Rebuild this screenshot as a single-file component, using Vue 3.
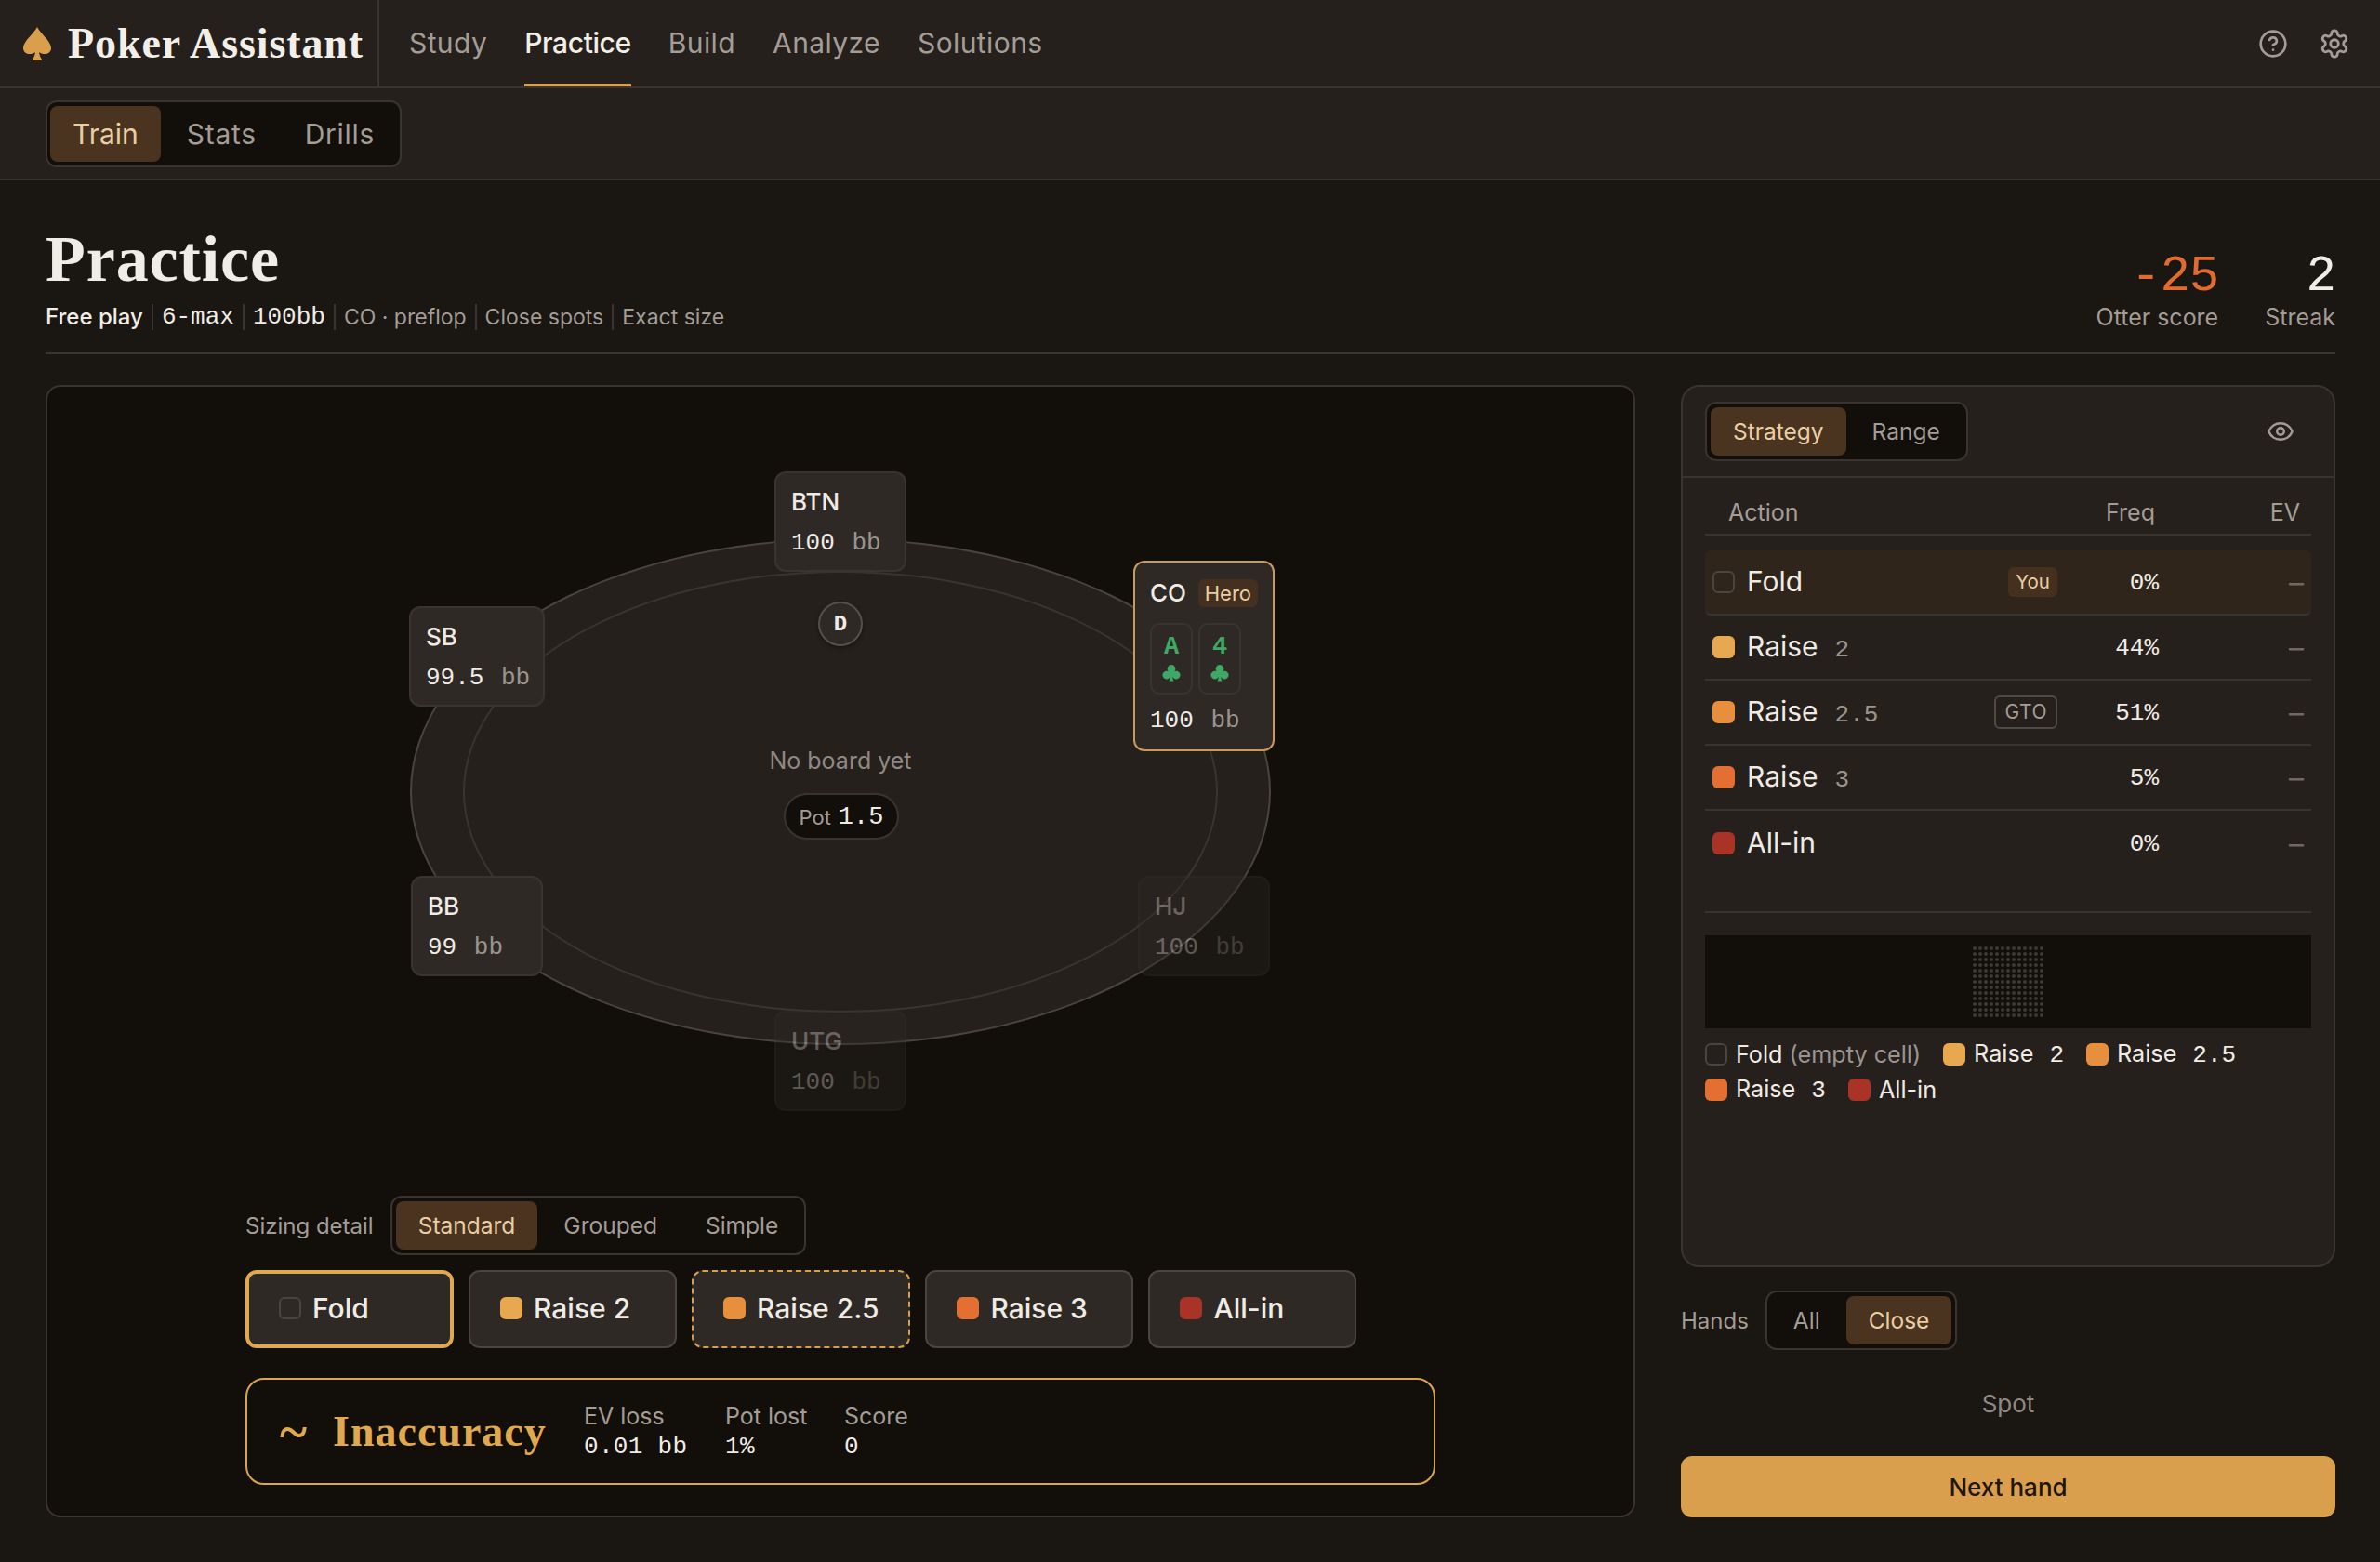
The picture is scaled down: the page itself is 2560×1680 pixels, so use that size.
<template>
  <div class="app">
    <header class="topbar">
      <div class="brand">
        <svg class="spade" viewBox="0 0 32 36"><path d="M16 0C20 8 31 15 31 23C31 29 23 31 18 27C18.5 31 20 34 22 36H10C12 34 13.5 31 14 27C9 31 1 29 1 23C1 15 12 8 16 0Z" /></svg>
        <span class="brand-name">Poker Assistant</span>
      </div>
      <nav class="nav">
        <a v-for="item in navItems" :key="item" class="nav-item" :class="{ active: item === 'Practice' }">{{ item }}</a>
      </nav>
      <div class="top-icons">
        <svg class="icon help" viewBox="0 0 24 24"><circle cx="12" cy="12" r="10" /><path d="M9.09 9a3 3 0 0 1 5.83 1c0 2-3 3-3 3" /><path d="M12 17h.01" /></svg>
        <svg class="icon gear" viewBox="0 0 24 24"><path d="M12.22 2h-.44a2 2 0 0 0-2 2v.18a2 2 0 0 1-1 1.73l-.43.25a2 2 0 0 1-2 0l-.15-.08a2 2 0 0 0-2.73.73l-.22.38a2 2 0 0 0 .73 2.73l.15.1a2 2 0 0 1 1 1.72v.51a2 2 0 0 1-1 1.74l-.15.09a2 2 0 0 0-.73 2.73l.22.38a2 2 0 0 0 2.73.73l.15-.08a2 2 0 0 1 2 0l.43.25a2 2 0 0 1 1 1.73V20a2 2 0 0 0 2 2h.44a2 2 0 0 0 2-2v-.18a2 2 0 0 1 1-1.73l.43-.25a2 2 0 0 1 2 0l.15.08a2 2 0 0 0 2.73-.73l.22-.39a2 2 0 0 0-.73-2.73l-.15-.08a2 2 0 0 1-1-1.74v-.5a2 2 0 0 1 1-1.74l.15-.09a2 2 0 0 0 .73-2.73l-.22-.38a2 2 0 0 0-2.73-.73l-.15.08a2 2 0 0 1-2 0l-.43-.25a2 2 0 0 1-1-1.73V4a2 2 0 0 0-2-2z" /><circle cx="12" cy="12" r="3" /></svg>
      </div>
    </header>

    <div class="subbar">
      <div class="seg seg-large">
        <span class="seg-tab active">Train</span>
        <span class="seg-tab">Stats</span>
        <span class="seg-tab">Drills</span>
      </div>
    </div>

    <main class="page">
      <section class="page-head">
        <div>
          <h1 class="title">Practice</h1>
          <div class="meta">
            <span class="meta-item strong">Free play</span>
            <span class="meta-item mono strong">6-max</span>
            <span class="meta-item mono strong">100bb</span>
            <span class="meta-item">CO · preflop</span>
            <span class="meta-item">Close spots</span>
            <span class="meta-item">Exact size</span>
          </div>
        </div>
        <div class="scores">
          <div class="score">
            <div class="score-num negative">-25</div>
            <div class="score-label">Otter score</div>
          </div>
          <div class="score">
            <div class="score-num">2</div>
            <div class="score-label">Streak</div>
          </div>
        </div>
      </section>

      <div class="columns">
        <section class="table-panel">
          <div class="canvas">
            <div class="oval"><div class="oval-inner"></div></div>

            <div class="dealer">D</div>
            <div class="board-text">No board yet</div>
            <div class="pot"><span class="pot-label">Pot</span> <span class="pot-num">1.5</span></div>

            <div v-for="seat in seats" :key="seat.name" class="seat" :class="[seat.cls, { dim: seat.dim }]">
              <div class="seat-name">{{ seat.name }}</div>
              <div class="seat-stack">{{ seat.stack }} <span class="bb">bb</span></div>
            </div>

            <div class="seat seat-co">
              <div class="hero-head">
                <span class="seat-name">CO</span>
                <span class="hero-badge">Hero</span>
              </div>
              <div class="cards">
                <div v-for="rank in ['A', '4']" :key="rank" class="card">
                  <span class="rank">{{ rank }}</span>
                  <svg class="club" viewBox="0 0 20 20"><path d="M10 1a4.3 4.3 0 0 0-3.4 7A4.4 4.4 0 1 0 8.8 14c-.1 1.700-.5 3-1.300 4.500h5c-.8-1.500-1.200-2.800-1.300-4.500a4.400 4.400 0 1 0 2.200-6A4.300 4.300 0 0 0 10 1z" /></svg>
                </div>
              </div>
              <div class="seat-stack">100 <span class="bb">bb</span></div>
            </div>
          </div>

          <div class="controls">
            <div class="sizing">
              <span class="sizing-label">Sizing detail</span>
              <div class="seg">
                <span class="seg-tab active">Standard</span>
                <span class="seg-tab">Grouped</span>
                <span class="seg-tab">Simple</span>
              </div>
            </div>

            <div class="actions">
              <button v-for="btn in actionButtons" :key="btn.label" class="action-btn" :class="btn.cls">
                <span class="swatch" :class="btn.swatch"></span>{{ btn.label }}
              </button>
            </div>

            <div class="verdict">
              <span class="verdict-mark">~</span>
              <span class="verdict-name">Inaccuracy</span>
              <div class="verdict-stat ev">
                <span class="verdict-label">EV loss</span>
                <span class="verdict-value">0.01 bb</span>
              </div>
              <div class="verdict-stat pot-lost">
                <span class="verdict-label">Pot lost</span>
                <span class="verdict-value">1%</span>
              </div>
              <div class="verdict-stat">
                <span class="verdict-label">Score</span>
                <span class="verdict-value">0</span>
              </div>
            </div>
          </div>
        </section>

        <aside class="side">
          <section class="strategy">
            <div class="strategy-head">
              <div class="seg">
                <span class="seg-tab active">Strategy</span>
                <span class="seg-tab">Range</span>
              </div>
              <svg class="icon eye" viewBox="0 0 24 24"><path d="M2.062 12.348a1 1 0 0 1 0-.696 10.75 10.75 0 0 1 19.876 0 1 1 0 0 1 0 .696 10.750 10.750 0 0 1-19.876 0" /><circle cx="12" cy="12" r="3" /></svg>
            </div>

            <div class="strategy-body">
              <div class="table-head">
                <span>Action</span>
                <span class="head-freq">Freq</span>
                <span class="head-ev">EV</span>
              </div>

              <div class="rows">
                <div v-for="row in rows" :key="row.name + row.size" class="row" :class="{ chosen: row.badge === 'You' }">
                  <span class="swatch" :class="row.swatch"></span>
                  <span class="row-name">{{ row.name }}<span v-if="row.size" class="row-size">{{ row.size }}</span></span>
                  <span v-if="row.badge" class="badge" :class="row.badge === 'You' ? 'badge-you' : 'badge-gto'">{{ row.badge }}</span>
                  <span class="row-freq">{{ row.freq }}</span>
                  <span class="row-ev">–</span>
                </div>
              </div>

              <div class="heat">
                <div class="heat-grid">
                  <i v-for="n in 169" :key="n" class="heat-dot"></i>
                </div>
              </div>

              <div class="legend">
                <span class="legend-item"><span class="swatch fold"></span><span>Fold <em>(empty cell)</em></span></span>
                <span class="legend-item"><span class="swatch r2"></span><span>Raise<b>2</b></span></span>
                <span class="legend-item"><span class="swatch r25"></span><span>Raise<b>2.5</b></span></span>
                <span class="legend-item"><span class="swatch r3"></span><span>Raise<b>3</b></span></span>
                <span class="legend-item"><span class="swatch allin"></span><span>All-in</span></span>
              </div>
            </div>
          </section>

          <div class="hands">
            <span class="hands-label">Hands</span>
            <div class="seg">
              <span class="seg-tab">All</span>
              <span class="seg-tab active">Close</span>
            </div>
          </div>

          <div class="spot">Spot</div>

          <button class="next">Next hand</button>
        </aside>
      </div>
    </main>
  </div>
</template>

<script setup>
const navItems = ['Study', 'Practice', 'Build', 'Analyze', 'Solutions']

const seats = [
  { name: 'BTN', stack: '100', cls: 'seat-btn' },
  { name: 'SB', stack: '99.5', cls: 'seat-sb' },
  { name: 'BB', stack: '99', cls: 'seat-bb' },
  { name: 'HJ', stack: '100', cls: 'seat-hj', dim: true },
  { name: 'UTG', stack: '100', cls: 'seat-utg', dim: true }
]

const actionButtons = [
  { label: 'Fold', swatch: 'fold', cls: 'picked' },
  { label: 'Raise 2', swatch: 'r2' },
  { label: 'Raise 2.5', swatch: 'r25', cls: 'best' },
  { label: 'Raise 3', swatch: 'r3' },
  { label: 'All-in', swatch: 'allin' }
]

const rows = [
  { name: 'Fold', size: '', swatch: 'fold', freq: '0%', badge: 'You' },
  { name: 'Raise', size: '2', swatch: 'r2', freq: '44%' },
  { name: 'Raise', size: '2.5', swatch: 'r25', freq: '51%', badge: 'GTO' },
  { name: 'Raise', size: '3', swatch: 'r3', freq: '5%' },
  { name: 'All-in', size: '', swatch: 'allin', freq: '0%' }
]
</script>

<style>
html, body {
  background: #1a1612;
}
</style>

<style scoped>
.app {
  min-height: 1680px;
  background: #1a1612;
  color: #efebe5;
  font-family: Inter, "Noto Sans", sans-serif;
}
.topbar {
  height: 95px;
  display: flex;
  background: #26201d;
  border-bottom: 2px solid #3a3431;
  box-sizing: border-box;
}
.brand {
  width: 408px;
  box-sizing: border-box;
  padding-left: 24px;
  display: flex;
  align-items: center;
  gap: 17px;
  border-right: 2px solid #3a3431;
}
.spade {
  width: 32px;
  height: 36px;
  fill: #d99f4d;
}
.brand-name {
  font-family: "Liberation Serif", serif;
  font-weight: 700;
  font-size: 46px;
  letter-spacing: 0.9px;
  color: #f2eee8;
}
.nav {
  display: flex;
  gap: 40px;
  padding-left: 32px;
  flex: 1;
}
.nav-item {
  font-size: 30px;
  line-height: 93px;
  letter-spacing: 0.4px;
  color: #a39d96;
  height: 93px;
  box-sizing: border-box;
}
.nav-item.active {
  color: #f2eee8;
  font-weight: 500;
  letter-spacing: -0.4px;
  border-bottom: 3px solid #d99f4d;
}
.top-icons {
  display: flex;
  align-items: center;
  gap: 33px;
  padding-right: 32px;
}
.icon {
  fill: none;
  stroke: #a39d96;
  stroke-width: 2;
  stroke-linecap: round;
  stroke-linejoin: round;
}
.help {
  width: 32px;
  height: 32px;
}
.gear {
  width: 34px;
  height: 34px;
}
.subbar {
  height: 99px;
  box-sizing: border-box;
  padding: 13px 49px 0;
  background: #26201d;
  border-bottom: 2px solid #3a3431;
}
.seg {
  display: inline-flex;
  gap: 4px;
  box-sizing: border-box;
  height: 64px;
  padding: 4px;
  background: #120e0a;
  border: 2px solid #3a3431;
  border-radius: 12px;
}
.seg-tab {
  display: flex;
  align-items: center;
  padding: 0 24px;
  font-size: 24.5px;
  color: #a39d96;
  border-radius: 8px;
}
.seg-tab.active {
  background: #4a331f;
  color: #e9cfa4;
}
.seg-large {
  height: 72px;
  padding: 4px 3px;
}
.seg-large .seg-tab {
  font-size: 30px;
  letter-spacing: 0.7px;
  padding: 0 24px;
}
.seg-large .seg-tab.active {
  letter-spacing: 0;
}
.page {
  padding: 0 48px 0 49px;
}
.page-head {
  display: flex;
  justify-content: space-between;
  align-items: flex-end;
  padding: 45px 0 20px;
  border-bottom: 2px solid #3a3431;
  margin-bottom: 33px;
}
.title {
  margin: 0;
  font-family: "Liberation Serif", serif;
  font-size: 70px;
  line-height: 80px;
  font-weight: 700;
  letter-spacing: 0.9px;
  color: #f0ece6;
}
.meta {
  display: flex;
  align-items: center;
  margin-top: 4px;
  height: 36px;
  font-size: 23px;
  color: #a39d96;
}
.meta-item {
  padding: 0 9px;
  border-left: 2px solid #3a3431;
  line-height: 28px;
}
.meta-item:first-child {
  padding-left: 0;
  border-left: none;
}
.meta-item.strong {
  color: #f0ece6;
  font-size: 24px;
  font-weight: 500;
}
.meta-item.mono {
  font-family: "Liberation Mono", monospace;
  font-size: 26px;
  font-weight: 400;
}
.scores {
  display: flex;
  gap: 50px;
  text-align: right;
}
.score-num {
  font-family: "Liberation Mono", monospace;
  font-size: 54px;
  line-height: 50px;
  letter-spacing: -1px;
  color: #f0ece6;
}
.score-num.negative {
  color: #e06c32;
}
.score-label {
  font-size: 25px;
  line-height: 36px;
  color: #a39d96;
}
.columns {
  display: grid;
  grid-template-columns: 1710px 704px;
  gap: 49px;
  height: 1216px;
}
.table-panel {
  box-sizing: border-box;
  background: #120e0a;
  border: 2px solid #3a3431;
  border-radius: 16px;
  display: flex;
  flex-direction: column;
  align-items: center;
}
.canvas {
  position: relative;
  width: 936px;
  height: 692px;
  margin-top: 89px;
  flex-shrink: 0;
}
.oval {
  position: absolute;
  left: 5px;
  top: 74px;
  width: 926px;
  height: 545px;
  box-sizing: border-box;
  border: 2px solid #4a443f;
  border-radius: 50%;
  background: #26201d;
}
.oval-inner {
  position: absolute;
  inset: 33px 55px;
  border: 2px solid #3a3431;
  border-radius: 50%;
}
.dealer {
  position: absolute;
  left: 444px;
  top: 142px;
  width: 48px;
  height: 48px;
  box-sizing: border-box;
  border-radius: 50%;
  background: #2f2925;
  border: 2px solid #55504b;
  display: flex;
  align-items: center;
  justify-content: center;
  font-family: "Liberation Mono", monospace;
  font-weight: 700;
  font-size: 24px;
  box-shadow: 0 2px 4px rgba(0, 0, 0, 0.4);
}
.board-text {
  position: absolute;
  left: 0;
  right: 0;
  top: 296px;
  text-align: center;
  font-size: 25px;
  line-height: 34px;
  color: #8f8984;
}
.pot {
  position: absolute;
  left: 407px;
  top: 348px;
  width: 124px;
  height: 50px;
  box-sizing: border-box;
  padding-top: 2px;
  border: 2px solid #3a3431;
  border-radius: 25px;
  background: #120e0a;
  display: flex;
  align-items: center;
  justify-content: center;
  gap: 8px;
}
.pot-label {
  font-size: 22px;
  color: #a39d96;
}
.pot-num {
  font-family: "Liberation Mono", monospace;
  font-size: 27px;
  color: #efebe5;
}
.seat {
  position: absolute;
  box-sizing: border-box;
  width: 142px;
  height: 108px;
  padding: 15px 16px;
  background: #2f2925;
  border: 2px solid #3a3431;
  border-radius: 12px;
}
.seat-btn { left: 397px; top: 2px; }
.seat-sb { left: 4px; top: 147px; width: 146px; }
.seat-bb { left: 6px; top: 437px; }
.seat-hj { left: 788px; top: 437px; }
.seat-utg { left: 397px; top: 582px; }
.seat.dim {
  opacity: 0.34;
}
.seat-name {
  font-size: 26px;
  line-height: 32px;
  font-weight: 500;
  color: #efebe5;
}
.seat-stack {
  margin-top: 12px;
  font-family: "Liberation Mono", monospace;
  font-size: 26px;
  line-height: 32px;
  color: #efebe5;
  white-space: nowrap;
}
.bb {
  margin-left: 3px;
  color: #9a948e;
}
.seat-co {
  left: 783px;
  top: 98px;
  width: 152px;
  height: 205px;
  padding: 18px 16px;
  border-color: #c99a5c;
}
.hero-head {
  display: flex;
  align-items: center;
  justify-content: space-between;
  height: 30px;
}
.hero-badge {
  height: 30px;
  padding: 0 7px;
  border-radius: 6px;
  background: #45301f;
  color: #e9cfa4;
  font-size: 22px;
  line-height: 30px;
}
.cards {
  display: flex;
  gap: 6px;
  margin-top: 17px;
}
.card {
  width: 46px;
  height: 77px;
  box-sizing: border-box;
  border: 2px solid #3a3431;
  border-radius: 10px;
  display: flex;
  flex-direction: column;
  align-items: center;
  padding-top: 9px;
}
.rank {
  font-family: "Liberation Mono", monospace;
  font-size: 27px;
  line-height: 30px;
  font-weight: 700;
  color: #3fa866;
}
.club {
  width: 20px;
  height: 20px;
  margin-top: 3px;
  fill: #3fa866;
}
.controls {
  width: 1280px;
  margin-top: 89px;
}
.sizing {
  display: flex;
  align-items: center;
  gap: 18px;
}
.sizing-label {
  font-size: 24px;
  color: #a39d96;
}
.actions {
  display: flex;
  gap: 16px;
  margin-top: 16px;
}
.action-btn {
  display: flex;
  align-items: center;
  min-width: 224px;
  height: 84px;
  box-sizing: border-box;
  padding: 0 32px 2px;
  background: #2f2925;
  border: 2px solid #4a4541;
  border-radius: 12px;
  color: #efebe5;
  font-family: inherit;
  font-size: 30px;
  font-weight: 500;
}
.action-btn .swatch {
  margin-right: 12px;
}
.action-btn.picked {
  border: 4px solid #e0a94f;
}
.action-btn.best {
  border: 2px dashed #d99f4d;
}
.swatch {
  flex-shrink: 0;
  display: inline-block;
  width: 24px;
  height: 24px;
  box-sizing: border-box;
  border-radius: 6px;
}
.swatch.fold { border: 2px solid #4a4541; background: transparent; }
.swatch.r2 { background: #e8a850; }
.swatch.r25 { background: #e88f3e; }
.swatch.r3 { background: #e36f32; }
.swatch.allin { background: #aa3327; }
.verdict {
  display: flex;
  align-items: center;
  height: 115px;
  box-sizing: border-box;
  margin-top: 32px;
  padding-left: 35px;
  border: 2px solid #d9a54f;
  border-radius: 20px;
}
.verdict-mark {
  font-family: "Liberation Serif", serif;
  font-size: 56px;
  line-height: 56px;
  font-weight: 700;
  color: #e0a94f;
  width: 57px;
}
.verdict-name {
  font-family: "Liberation Serif", serif;
  font-size: 46px;
  font-weight: 700;
  letter-spacing: 1px;
  color: #e0a94f;
  width: 270px;
}
.verdict-stat {
  display: flex;
  flex-direction: column;
  gap: 3px;
  width: 128px;
}
.verdict-stat.ev {
  width: 152px;
}
.verdict-label {
  font-size: 25px;
  line-height: 30px;
  color: #a39d96;
}
.verdict-value {
  font-family: "Liberation Mono", monospace;
  font-size: 26px;
  line-height: 30px;
  letter-spacing: 0.3px;
  color: #efebe5;
}
.side {
  display: flex;
  flex-direction: column;
}
.strategy {
  height: 949px;
  box-sizing: border-box;
  background: #26201d;
  border: 2px solid #3a3431;
  border-radius: 20px;
}
.strategy-head {
  height: 98px;
  box-sizing: border-box;
  padding: 16px 42px 0 24px;
  display: flex;
  justify-content: space-between;
  border-bottom: 2px solid #3a3431;
}
.eye {
  width: 30px;
  height: 30px;
  margin-top: 17px;
}
.strategy-body {
  padding: 0 24px;
}
.table-head {
  position: relative;
  height: 62px;
  box-sizing: border-box;
  padding: 22px 12px 0 25px;
  display: flex;
  font-size: 25px;
  line-height: 30px;
  color: #a39d96;
  border-bottom: 2px solid #3a3431;
}
.head-freq {
  margin-left: auto;
  margin-right: 156px;
}
.head-ev {
  position: absolute;
  right: 12px;
}
.rows {
  margin-top: 16px;
}
.row {
  display: flex;
  align-items: center;
  height: 70px;
  box-sizing: border-box;
  padding: 0 8px;
  border-bottom: 2px solid #3a3431;
}
.row:last-child {
  border-bottom: none;
}
.row.chosen {
  background: #30251a;
  border-radius: 6px;
}
.row-name {
  margin-left: 13px;
  margin-top: -2px;
  font-size: 30px;
  color: #efebe5;
}
.row-size {
  margin-left: 18px;
  font-family: "Liberation Mono", monospace;
  font-size: 26px;
  color: #9a948e;
}
.badge {
  margin-left: auto;
  box-sizing: border-box;
  border-radius: 6px;
}
.badge-you {
  padding: 0 8px;
  height: 32px;
  line-height: 32px;
  font-size: 20.5px;
  background: #45301f;
  color: #e9cfa4;
}
.badge-gto {
  padding: 0 9px;
  height: 36px;
  line-height: 32px;
  border: 2px solid #4f4a46;
  color: #a39d96;
  font-size: 21px;
  letter-spacing: 0.5px;
}
.row-freq {
  margin-left: auto;
  margin-top: 2px;
  width: 109px;
  text-align: right;
  font-family: "Liberation Mono", monospace;
  font-size: 26px;
  color: #efebe5;
}
.badge + .row-freq {
  margin-left: 0;
}
.row-ev {
  width: 156px;
  text-align: right;
  font-size: 32px;
  color: #6f6964;
}
.heat {
  margin-top: 64px;
  position: relative;
  height: 100px;
  background: #120e0a;
  display: flex;
  align-items: center;
  justify-content: center;
}
.heat::before {
  content: "";
  position: absolute;
  left: 0;
  right: 0;
  top: -26px;
  border-top: 2px solid #3a3431;
}
.heat-grid {
  display: grid;
  grid-template-columns: repeat(13, 4px);
  grid-auto-rows: 4px;
  gap: 2px;
}
.heat-dot {
  border-radius: 50%;
  background: #3d3935;
}
.legend {
  display: flex;
  flex-wrap: wrap;
  gap: 8px 24px;
  margin-top: 13px;
  font-size: 25.2px;
  line-height: 28px;
  color: #efebe5;
}
.legend-item {
  display: flex;
  align-items: center;
  gap: 9px;
  white-space: nowrap;
}
.legend-item em {
  font-style: normal;
  color: #9a948e;
}
.legend-item b {
  margin-left: 17px;
  font-family: "Liberation Mono", monospace;
  font-size: 26px;
  font-weight: 400;
}
.hands {
  display: flex;
  align-items: center;
  gap: 18px;
  margin-top: 25px;
}
.hands-label {
  font-size: 24px;
  color: #a39d96;
}
.spot {
  margin-top: 40px;
  text-align: center;
  font-size: 26px;
  line-height: 36px;
  color: #8f8984;
}
.next {
  margin-top: 38px;
  height: 66px;
  border: none;
  border-radius: 12px;
  background: #d99f4d;
  color: #1f150a;
  font-family: inherit;
  font-size: 26px;
  font-weight: 500;
}
</style>
